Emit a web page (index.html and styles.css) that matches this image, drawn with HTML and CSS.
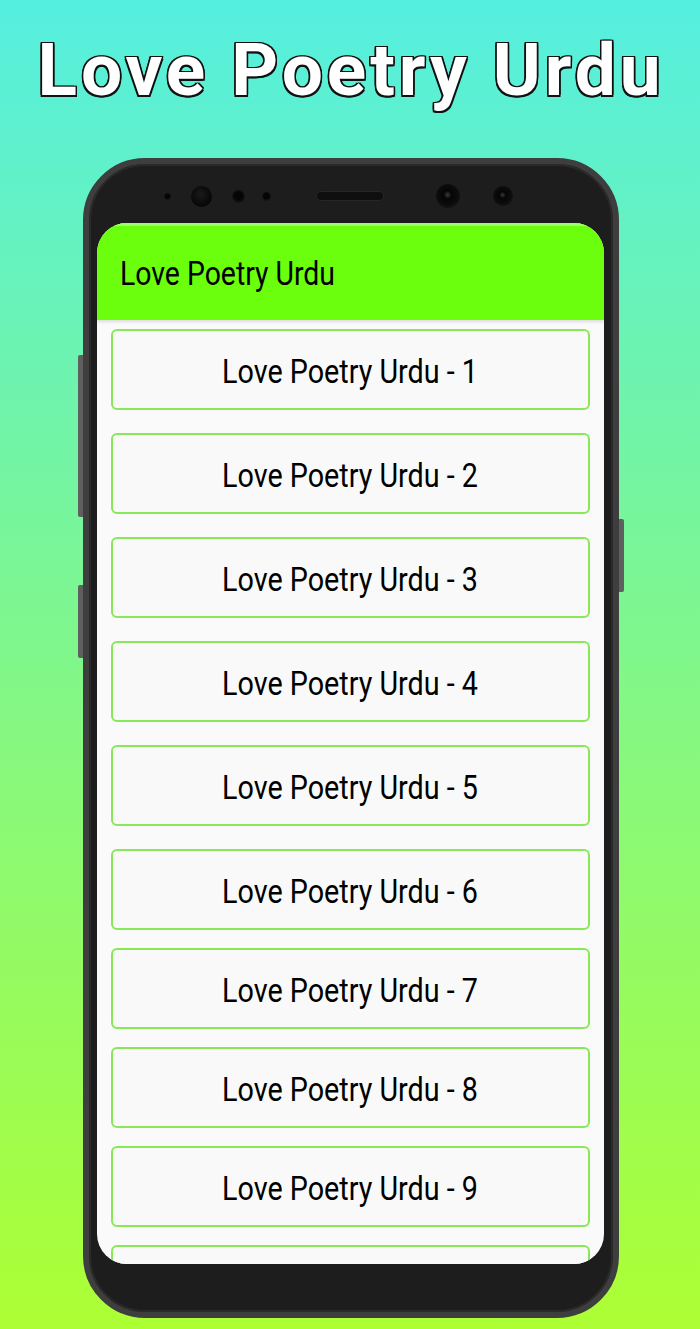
FILE: index.html
```html
<!DOCTYPE html>
<html lang="en">
<head>
    <meta charset="UTF-8">
    <meta name="viewport" content="width=device-width, initial-scale=1.0">
    <title>Love Poetry Urdu</title>
    <link rel="stylesheet" href="styles.css">
</head>
<body>
    <h1 class="banner-title">Love Poetry Urdu</h1>

    <div class="phone">
        <span class="side-btn left-top"></span>
        <span class="side-btn left-bottom"></span>
        <span class="side-btn right"></span>

        <div class="bezel-top">
            <span class="dot tiny"></span>
            <span class="dot big"></span>
            <span class="dot mid"></span>
            <span class="dot small"></span>
            <span class="speaker"></span>
            <span class="lens big-lens"></span>
            <span class="lens small-lens"></span>
        </div>

        <div class="screen">
            <div class="app-bar">
                <span class="app-title">Love Poetry Urdu</span>
            </div>
            <div class="list">
                <div class="item"><span class="item-text">Love Poetry Urdu - 1</span></div>
                <div class="item"><span class="item-text">Love Poetry Urdu - 2</span></div>
                <div class="item"><span class="item-text">Love Poetry Urdu - 3</span></div>
                <div class="item"><span class="item-text">Love Poetry Urdu - 4</span></div>
                <div class="item"><span class="item-text">Love Poetry Urdu - 5</span></div>
                <div class="item"><span class="item-text">Love Poetry Urdu - 6</span></div>
                <div class="item tight"><span class="item-text">Love Poetry Urdu - 7</span></div>
                <div class="item tight"><span class="item-text">Love Poetry Urdu - 8</span></div>
                <div class="item tight"><span class="item-text">Love Poetry Urdu - 9</span></div>
                <!-- next row only peeks in under the fold -->
                <div class="item tight"></div>
            </div>
        </div>
    </div>
</body>
</html>
```

FILE: styles.css
```css
body {
    margin: 0;
    width: 700px;
    height: 1329px;
    overflow: hidden;
    background: linear-gradient(#55efe0, #adff33);
    font-family: Roboto, "Liberation Sans", sans-serif;
    display: flex;
    flex-direction: column;
    align-items: center;
}

/* big outlined heading */
.banner-title {
    margin: 31px 0 0 2px;
    font-size: 73px;
    line-height: 78px;
    font-weight: 700;
    letter-spacing: 3.9px;
    color: #fff;
    text-shadow:
        -1.5px -1.5px 0 #111, 1.5px -1.5px 0 #111,
        -1.5px 1.5px 0 #111, 1.5px 1.5px 0 #111,
        0 -1.5px 0 #111, 0 1.5px 0 #111,
        -1.5px 0 0 #111, 1.5px 0 0 #111;
}

/* phone frame */
.phone {
    position: relative;
    margin-top: 49px;
    margin-left: 1px;
    width: 536px;
    height: 1160px;
    box-sizing: border-box;
    padding: 0 9px 48px 8px;
    border: 6px solid #3e3e3e;
    border-radius: 62px;
    background: #1d1d1d;
    box-shadow: inset 0 0 0 2px #2a2a2a;
    display: flex;
    flex-direction: column;
}
.side-btn {
    position: absolute;
    width: 5px;
    background: #5f5f5f;
}
.side-btn.left-top {
    left: -11px;
    top: 191px;
    height: 162px;
    border-radius: 2px 0 0 2px;
}
.side-btn.left-bottom {
    left: -11px;
    top: 421px;
    height: 73px;
    border-radius: 2px 0 0 2px;
}
.side-btn.right {
    right: -11px;
    top: 355px;
    height: 73px;
    border-radius: 0 2px 2px 0;
}

.bezel-top {
    height: 59px;
    display: flex;
    align-items: center;
    padding-top: 5px;
    box-sizing: border-box;
    padding-left: 67px;
}
.dot {
    border-radius: 50%;
    background: radial-gradient(circle at 50% 45%, #050505 40%, #151515 70%, #262626);
}
.dot.tiny { width: 7px; height: 7px; }
.dot.big { width: 21px; height: 21px; margin-left: 20px; background: radial-gradient(circle at 45% 40%, #1a1a1a, #060606 70%); }
.dot.mid { width: 13px; height: 13px; margin-left: 20px; }
.dot.small { width: 9px; height: 9px; margin-left: 17px; }
.speaker {
    width: 66px;
    height: 8px;
    margin-left: 46px;
    border-radius: 4px;
    background: #0f0f0f;
    box-shadow: 0 0 0 1px #262626;
}
.lens {
    border-radius: 50%;
    background: radial-gradient(circle at 48% 45%, #3a3a3a 0, #050505 22%, #0c0c0c 55%, #161616 80%, #262626);
}
.big-lens { width: 24px; height: 24px; margin-left: 53px; }
.small-lens { width: 20px; height: 20px; margin-left: 33px; }

/* app screen */
.screen {
    flex: 1;
    border-radius: 30px;
    overflow: hidden;
    background: #fafafa;
    display: flex;
    flex-direction: column;
}
.app-bar {
    height: 97px;
    flex-shrink: 0;
    background: #6bff0d;
    border-top: 3px solid #9cff6a;
    box-sizing: border-box;
    display: flex;
    align-items: center;
    padding-left: 23px;
    box-shadow: 0 2px 3px rgba(0, 0, 0, 0.12);
}
.app-title {
    display: inline-block;
    font-size: 33px;
    color: #000;
    transform: scaleX(0.86);
    transform-origin: left center;
    white-space: nowrap;
}

.list {
    padding: 9px 14px 0;
    display: flex;
    flex-direction: column;
}
.item {
    height: 81px;
    flex-shrink: 0;
    box-sizing: border-box;
    border: 2px solid #88e856;
    border-radius: 6px;
    background: #f9f9f9;
    display: flex;
    align-items: center;
    justify-content: center;
    margin-bottom: 23px;
}
.item.tight {
    margin-top: -5px;
}
.item-text {
    display: inline-block;
    font-size: 33px;
    color: #000;
    white-space: nowrap;
    transform: scaleX(0.87);
    margin-top: 3px;
}
```
